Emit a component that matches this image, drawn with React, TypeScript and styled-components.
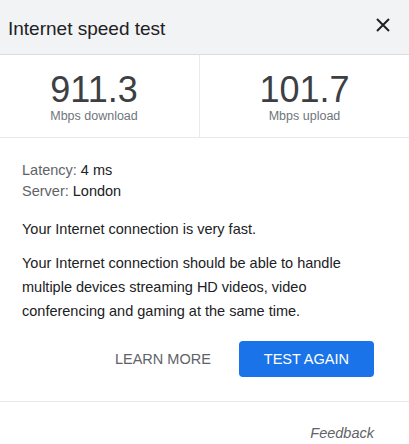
import styled, { createGlobalStyle } from 'styled-components';

const GlobalStyle = createGlobalStyle`
  html, body {
    margin: 0;
    padding: 0;
    background: #ffffff;
  }
  body {
    font-family: "Liberation Sans", Arial, sans-serif;
    color: #202124;
  }
  * {
    box-sizing: border-box;
  }
`;

const Dialog = styled.div`
  width: 409px;
  height: 444px;
  overflow: hidden;
  display: flex;
  flex-direction: column;
  background: #ffffff;
`;

const Header = styled.div`
  height: 55px;
  display: flex;
  align-items: center;
  justify-content: space-between;
  padding: 4px 19px 0 8px;
  background: #f1f3f4;
  border-bottom: 1px solid #dadce0;
`;

const Title = styled.h1`
  margin: 0;
  font-size: 19px;
  font-weight: 400;
  color: #202124;
`;

const CloseButton = styled.button`
  border: 0;
  background: transparent;
  padding: 0;
  width: 14px;
  height: 14px;
  margin-top: -8px;
  display: flex;
  align-items: center;
  justify-content: center;
  cursor: pointer;
  svg {
    display: block;
  }
`;

const Stats = styled.div`
  display: grid;
  grid-template-columns: 200px 1fr;
  border-bottom: 1px solid #e8eaed;
`;

const StatCell = styled.div<{ $first?: boolean }>`
  display: flex;
  flex-direction: column;
  align-items: center;
  padding: 17px ${(p) => (p.$first ? '11px' : '0')} 13px 0;
  border-right: ${(p) => (p.$first ? '1px solid #e8eaed' : '0')};
`;

const StatValue = styled.div`
  font-size: 36px;
  line-height: 36px;
  color: #3c4043;
`;

const StatLabel = styled.div`
  font-size: 12.5px;
  line-height: 16px;
  color: #70757a;
`;

const Body = styled.div`
  padding: 22px 35px 24px 22px;
  border-bottom: 1px solid #e8eaed;
  font-size: 14.5px;
`;

const InfoLine = styled.div`
  line-height: 21px;
  color: #202124;
  span {
    color: #5f6368;
  }
`;

const Text = styled.p<{ $gap: number }>`
  margin: ${(p) => p.$gap}px 0 0;
  line-height: 24px;
  color: #202124;
`;

const Actions = styled.div`
  display: flex;
  justify-content: flex-end;
  align-items: center;
  gap: 3px;
  margin-top: 18px;
`;

const ActionButton = styled.button<{ $primary?: boolean }>`
  height: 36px;
  padding: 0 25px;
  border: 0;
  border-radius: 4px;
  font-family: "Liberation Sans", Arial, sans-serif;
  font-size: 14.5px;
  text-transform: uppercase;
  cursor: pointer;
  background: ${(p) => (p.$primary ? '#1a73e8' : 'transparent')};
  color: ${(p) => (p.$primary ? '#ffffff' : '#5f6368')};
`;

const Footer = styled.div`
  display: flex;
  justify-content: flex-end;
  padding: 21px 35px 0 22px;
`;

const FeedbackLink = styled.a`
  font-size: 14.5px;
  line-height: 20px;
  font-style: italic;
  color: #5f6368;
  text-decoration: none;
`;

export default function App() {
  return (
    <>
      <GlobalStyle />
      <Dialog>
        <Header>
          <Title>Internet speed test</Title>
          <CloseButton aria-label="Close">
            <svg width="14" height="14" viewBox="0 0 14 14">
              <path d="M1 1L13 13M13 1L1 13" stroke="#202124" strokeWidth="2" />
            </svg>
          </CloseButton>
        </Header>
        <Stats>
          <StatCell $first>
            <StatValue>911.3</StatValue>
            <StatLabel>Mbps download</StatLabel>
          </StatCell>
          <StatCell>
            <StatValue>101.7</StatValue>
            <StatLabel>Mbps upload</StatLabel>
          </StatCell>
        </Stats>
        <Body>
          <InfoLine>
            <span>Latency:</span> 4 ms
          </InfoLine>
          <InfoLine>
            <span>Server:</span> London
          </InfoLine>
          <Text $gap={15}>Your Internet connection is very fast.</Text>
          <Text $gap={10}>
            Your Internet connection should be able to handle multiple devices
            streaming HD videos, video conferencing and gaming at the same time.
          </Text>
          <Actions>
            <ActionButton>Learn more</ActionButton>
            <ActionButton $primary>Test again</ActionButton>
          </Actions>
        </Body>
        <Footer>
          <FeedbackLink href="#">Feedback</FeedbackLink>
        </Footer>
      </Dialog>
    </>
  );
}
